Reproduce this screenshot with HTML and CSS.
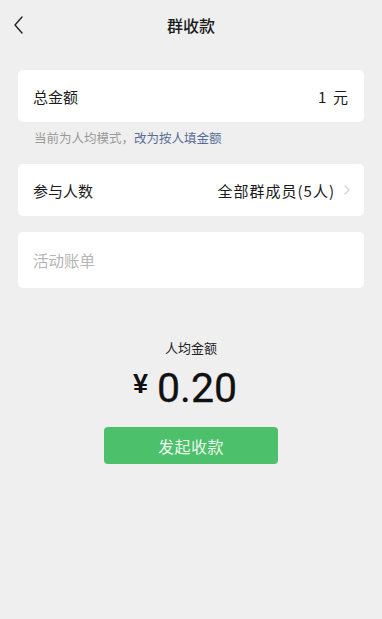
FILE: index.html
```html
<!DOCTYPE html>
<html lang="zh-CN">
<head>
<meta charset="utf-8">
<title>群收款</title>
<link rel="stylesheet" href="styles.css">
</head>
<body>
<div class="page">
  <header class="nav">
    <span class="back">
      <svg width="12" height="20" viewBox="0 0 12 20"><polyline points="10,2 3,10 10,18" fill="none" stroke="#222" stroke-width="1.4" stroke-linecap="round" stroke-linejoin="round"/></svg>
    </span>
    <h1 class="title">群收款</h1>
  </header>

  <div class="card row">
    <span class="label">总金额</span>
    <span class="value">1&nbsp;&nbsp;元</span>
  </div>
  <p class="hint">当前为人均模式，<span class="link">改为按人填金额</span></p>

  <div class="card row">
    <span class="label">参与人数</span>
    <span class="value"><span class="members">全部群成员(5人)</span>
      <svg class="arrow" width="6" height="10" viewBox="0 0 6 10"><polyline points="1,1 5,5 1,9" fill="none" stroke="#d2d2d2" stroke-width="1.3" stroke-linecap="round" stroke-linejoin="round"/></svg>
    </span>
  </div>

  <div class="card row tall">
    <span class="placeholder">活动账单</span>
  </div>

  <section class="summary">
    <div class="avg-label">人均金额</div>
    <div class="amount"><span class="yen">¥</span><span class="num">0.20</span></div>
    <button class="btn">发起收款</button>
  </section>
</div>
</body>
</html>
```

FILE: styles.css
```css
html, body {
  margin: 0;
  padding: 0;
  background: #efefef;
}
body {
  font-family: "Noto Sans CJK SC", "Noto Sans", sans-serif;
  color: #1b1b1b;
}
.page {
  width: 382px;
  min-height: 619px;
}
.nav {
  position: relative;
  height: 50px;
  display: flex;
  align-items: center;
  justify-content: center;
}
.back {
  position: absolute;
  left: 12px;
  top: 15px;
  display: flex;
}
.title {
  margin: 0;
  font-size: 16px;
  font-weight: 500;
  line-height: 20px;
  color: #1b1b1b;
}
.card {
  margin: 0 18px;
  background: #fff;
  border-radius: 5px;
}
.row {
  height: 52px;
  display: flex;
  align-items: center;
  justify-content: space-between;
  padding: 0 16px 0 15px;
  font-size: 15px;
}
.nav + .card {
  margin-top: 20px;
}
.label {
  color: #1b1b1b;
}
.value {
  display: flex;
  align-items: center;
  color: #1b1b1b;
}
.members {
  letter-spacing: 1px;
}
.arrow {
  margin-left: 9px;
  margin-right: -2px;
}
.hint {
  margin: 0;
  padding: 7px 34px 17px;
  font-size: 12.5px;
  line-height: 18px;
  color: #9a9a9a;
}
.link {
  color: #5a6d96;
}
.hint + .card {
  margin-bottom: 16px;
}
.tall {
  height: 56px;
}
.placeholder {
  color: #b5b5b5;
  font-size: 15.5px;
}
.summary {
  display: flex;
  flex-direction: column;
  align-items: center;
  padding-top: 51px;
}
.avg-label {
  font-size: 13px;
  line-height: 18px;
  color: #222;
}
.amount {
  margin-top: 7px;
  margin-right: 12px;
  display: flex;
  align-items: baseline;
  height: 48px;
  line-height: 48px;
}
.yen {
  font-family: "Liberation Sans", sans-serif;
  font-weight: 700;
  font-size: 27px;
  margin-right: 9px;
  position: relative;
  top: -9px;
  color: #111;
}
.num {
  font-family: Roboto, sans-serif;
  font-size: 41px;
  font-weight: 400;
  color: #111;
  -webkit-text-stroke: 0.3px #111;
}
.btn {
  margin-top: 15px;
  width: 174px;
  height: 37px;
  border: none;
  border-radius: 4px;
  background: #4cc06a;
  color: rgba(255, 255, 255, 0.92);
  font-family: "Noto Sans CJK SC", sans-serif;
  font-size: 16px;
  letter-spacing: 0.5px;
  padding: 0;
}
```
